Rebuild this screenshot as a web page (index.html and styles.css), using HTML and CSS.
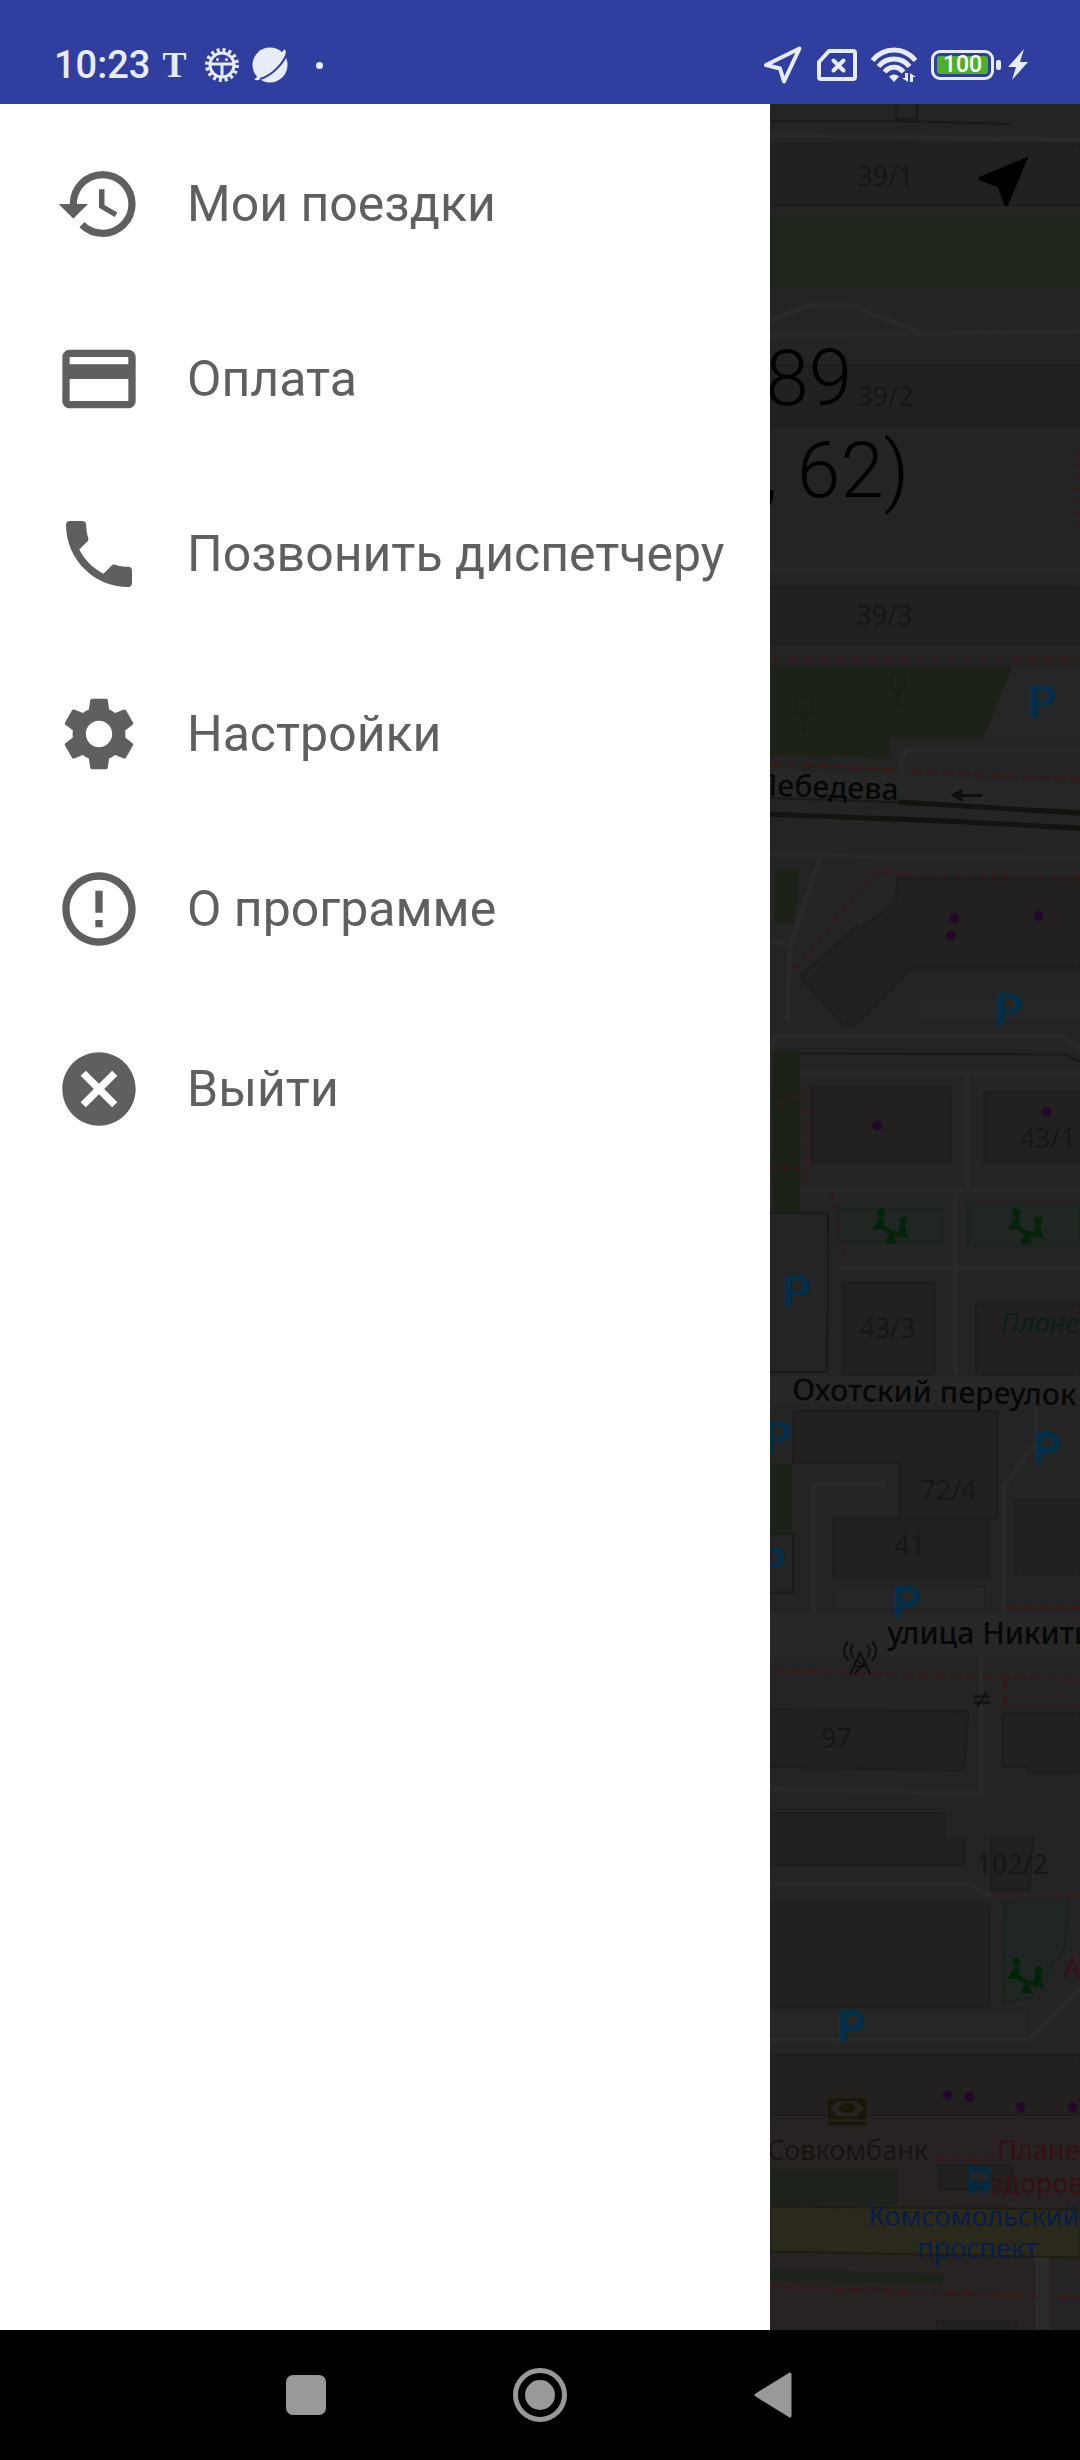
FILE: index.html
```
<!DOCTYPE html>
<html lang="ru">
<head>
  <meta charset="UTF-8">
  <meta name="viewport" content="width=device-width, initial-scale=1">
  <title>Меню</title>
  <link rel="stylesheet" href="styles.css">
</head>
<body>

<header class="status">
  <div class="status-left">
    <span class="time">10:23</span>
    <span class="t-mark">T</span>
    <svg class="gear" width="36" height="36" viewBox="0 0 36 36">
      <circle cx="18" cy="18" r="15" fill="none" stroke="currentColor" stroke-width="4" stroke-dasharray="3 2.9"/>
      <circle cx="18" cy="18" r="12" fill="none" stroke="currentColor" stroke-width="3"/>
      <path d="M6 17h24M18 17v13" stroke="currentColor" stroke-width="3"/>
      <circle cx="13.500" cy="12.500" r="1.500" fill="currentColor"/>
      <circle cx="22.500" cy="12.500" r="1.500" fill="currentColor"/>
    </svg>
    <svg width="36" height="36" viewBox="0 0 36 36">
      <circle cx="18" cy="18" r="17.500" fill="currentColor"/>
      <path d="M32 3c3 3-3 11-10 18C14 28 6 34 3 32" fill="currentColor" stroke="currentColor" stroke-width="2"/>
      <path d="M34 9c-3 6-8 12-13 16-5 4-9 6-13 7" fill="none" stroke="#303f9f" stroke-width="2"/>
    </svg>
    <span class="dot"></span>
  </div>
  <div class="status-right">
    <svg width="40" height="40" viewBox="0 0 40 40">
      <path d="M36.500 3.500L3 20l14 3.500L21 36.500z" fill="none" stroke="currentColor" stroke-width="4" stroke-linejoin="round"/>
    </svg>
    <svg width="40" height="32" viewBox="0 0 40 32">
      <path d="M12 2h24q2 0 2 2v24q0 2-2 2H4q-2 0-2-2V13z" fill="none" stroke="currentColor" stroke-width="4" stroke-linejoin="round"/>
      <path d="M16.500 11.500l10 10M26.500 11.500l-10 10" stroke="currentColor" stroke-width="4" stroke-linecap="round"/>
    </svg>
    <svg width="46" height="36" viewBox="0 0 46 36">
      <g fill="none" stroke="currentColor" stroke-width="5">
        <path d="M1.500 13.500C13-0.500 33-.5 44.500 13.500"/>
        <path d="M7.500 19.500c8-10 23-10 31 0"/>
        <path d="M13.500 25c5-6.500 14-6.500 19 0"/>
      </g>
      <path d="M18 29.500q5-4 10 0l-5 5.500z" fill="currentColor"/>
      <path d="M37 26v9l-6-4h3v-5zM39 35v-9l6 4h-3v5z" fill="currentColor"/>
    </svg>
    <span class="battery"><span class="battery-level">100</span></span>
    <svg class="bolt" width="20" height="32" viewBox="0 0 20 32">
      <path d="M16 0L0 18h8L4 31l16-18h-8z" fill="currentColor"/>
    </svg>
  </div>
</header>

<div class="screen">
  <nav class="drawer">
    <ul class="menu">
      <li><a class="menu-item" href="#trips">
        <svg class="icon" viewBox="0 0 24 24"><path d="M13 3a9 9 0 0 0-9 9H1l3.890 3.890.070.140L9 12H6c0-3.870 3.130-7 7-7s7 3.130 7 7-3.130 7-7 7c-1.930 0-3.680-.79-4.940-2.060l-1.420 1.420A8.954 8.954 0 0 0 13 21a9 9 0 0 0 0-18zm-1 5v5l4.280 2.540.72-1.210-3.500-2.080V8H12z"/></svg>
        <span>Мои поездки</span>
      </a></li>
      <li><a class="menu-item" href="#payment">
        <svg class="icon" viewBox="0 0 24 24"><path d="M20 4H4c-1.110 0-1.990.89-1.990 2L2 18c0 1.110.89 2 2 2h16c1.110 0 2-.89 2-2V6c0-1.110-.89-2-2-2zm0 14H4v-6h16v6zm0-10H4V6h16v2z"/></svg>
        <span>Оплата</span>
      </a></li>
      <li><a class="menu-item" href="#call">
        <svg class="icon" viewBox="0 0 24 24"><path d="M6.620 10.790c1.440 2.830 3.760 5.140 6.590 6.590l2.200-2.200c.27-.27.67-.36 1.020-.24 1.120.37 2.330.57 3.570.57.55 0 1 .45 1 1V20c0 .55-.45 1-1 1-9.390 0-17-7.610-17-17 0-.55.45-1 1-1h3.500c.55 0 1 .45 1 1 0 1.250.2 2.450.57 3.570.11.35.03.74-.25 1.020l-2.200 2.200z"/></svg>
        <span>Позвонить диспетчеру</span>
      </a></li>
    </ul>
    <ul class="menu">
      <li><a class="menu-item" href="#settings">
        <svg class="icon" viewBox="0 0 24 24"><path d="M19.140 12.940c.04-.3.060-.61.060-.94 0-.32-.02-.64-.07-.94l2.030-1.580c.18-.14.23-.41.12-.61l-1.920-3.320c-.12-.22-.37-.29-.59-.22l-2.390.96c-.5-.38-1.030-.7-1.620-.94l-.36-2.540c-.04-.24-.24-.41-.48-.41h-3.840c-.24 0-.43.17-.47.41l-.36 2.540c-.59.24-1.130.57-1.620.94l-2.390-.96c-.22-.08-.47 0-.59.22L2.740 8.870c-.12.21-.08.47.12.61l2.030 1.580c-.05.3-.09.63-.09.94s.02.64.07.94l-2.030 1.580c-.18.14-.23.41-.12.61l1.920 3.320c.12.22.37.29.59.22l2.390-.96c.5.38 1.030.7 1.620.94l.36 2.540c.05.24.24.41.48.41h3.840c.24 0 .44-.17.47-.41l.36-2.540c.59-.24 1.130-.56 1.620-.94l2.390.96c.22.080.47 0 .59-.22l1.920-3.320c.12-.22.070-.47-.12-.61l-2.010-1.580zM12 15.600c-1.980 0-3.600-1.620-3.600-3.600s1.620-3.600 3.600-3.600 3.600 1.620 3.600 3.600-1.620 3.600-3.600 3.600z"/></svg>
        <span>Настройки</span>
      </a></li>
      <li><a class="menu-item" href="#about">
        <svg class="icon" viewBox="0 0 24 24"><path d="M11 15h2v2h-2zm0-8h2v6h-2zm.99-5C6.470 2 2 6.480 2 12s4.470 10 9.990 10C17.520 22 22 17.520 22 12S17.520 2 11.990 2zM12 20c-4.420 0-8-3.580-8-8s3.580-8 8-8 8 3.580 8 8-3.580 8-8 8z"/></svg>
        <span>О программе</span>
      </a></li>
    </ul>
    <ul class="menu">
      <li><a class="menu-item" href="#exit">
        <svg class="icon" viewBox="0 0 24 24"><path d="M12 2C6.470 2 2 6.470 2 12s4.470 10 10 10 10-4.470 10-10S17.530 2 12 2zm5 13.590L15.590 17 12 13.410 8.410 17 7 15.590 10.590 12 7 8.410 8.410 7 12 10.590 15.590 7 17 8.410 13.410 12 17 15.590z"/></svg>
        <span>Выйти</span>
      </a></li>
    </ul>
  </nav>

  <main class="map">
    <svg class="map-canvas" viewBox="770 104 310 2226" preserveAspectRatio="xMinYMin slice">
      <defs>
        <g id="playground" fill="#03240a">
          <circle cx="9" cy="5" r="4"/>
          <circle cx="31" cy="13" r="4"/>
          <path d="M7 10h5v8l7 5 7 1 2-7h5l1 8 3 7-6-3h-6l-4-2 4 9H13l4-9-7-5H0z"/>
        </g>
      </defs>

      <!-- street bands and parking lots -->
      <g class="lot">
        <path d="M1012 664h68v73l-97-1z"/>
        <path d="M918 997h162v22H918z"/>
        <path d="M834 1584h150v22H834z"/>
        <path d="M770 2008h257v24H770z"/>
      </g>
      <g class="street">
        <path d="M770 768l310 16v24l-310-13z"/>
        <path d="M770 1374h310v28H770z"/>
        <path d="M770 1610h310v45H770z"/>
      </g>
      <path d="M770 2112h310v218H770z" fill="#272323"/>

      <!-- greens -->
      <g fill="#20251c">
        <path d="M770 217h310v71H770z"/>
        <path d="M770 664h242l-29 72h-93v21l-120-3z" fill="#1d2219"/>
        <path d="M775 867h25l-6 55h-19zM773 1050h27v160h-27zM770 1462h22v70h-22z" fill="#1d2219"/>
        <path d="M770 2166h128v35H770zM770 2266l172 4v11l-172-4z" fill="#1d221a"/>
      </g>
      <g fill="none" stroke="#181d15" stroke-width="2">
        <circle cx="804" cy="706" r="9"/>
        <circle cx="898" cy="681" r="8"/>
        <path d="M804 715v17M898 689v18"/>
      </g>

      <!-- roads -->
      <g class="road">
        <path d="M770 135l310 5M770 320l42-16h36l72 28M770 335l310-4M770 569h310"/>
        <path d="M901 775v-12q0-14 14-14h165"/>
        <path d="M770 854l310 3M820 855l-30 90-3 75M770 938l20 8"/>
        <path d="M770 1047l7-13h283l20 14"/>
        <path d="M800 1071h280M800 1188h280M840 1266h240M967 1071v117M955 1188v185"/>
        <path d="M813 1610v-128h72M1036 1405v35l-33 45v125"/>
        <path d="M981 1655v136l-211-5M770 1882h200l20 11"/>
        <path d="M770 2037h258l52-52"/>
      </g>

      <!-- buildings -->
      <g class="building">
        <path d="M770 144h310v61H770zM770 365h310v60H770zM770 587h310v56H770z"/>
        <path d="M897 877h183v89H912l-57 58h-12l-43-49 57-50 3 3 36-28z"/>
        <path d="M812 1086h138v74H812zM984 1091h96v69h-96z"/>
        <path d="M843 1281h91v91h-91zM976 1302h104v70H976z"/>
        <path d="M793 1409h204v107h-97v-55H793zM833 1516h154v58H833zM1015 1498h65v74h-65z"/>
        <path d="M770 1707l198 2-4 59-194-4zM1002 1710h78v60h-52v-6h-26z"/>
        <path d="M770 1810h174v27h20v25H770zM991 1835h42l-4 52h-38z"/>
        <path d="M770 1901h219v102H770zM770 2052h310v60H770z"/>
        <path d="M939 2162h72v24h-72zM937 2318h79v12h-79z"/>
      </g>
      <path d="M770 1211h58l-1 159h-57M770 1532h23v58h-23M896 104v15h21v-15M770 121h130l110 3M800 1052l265 1 15 7" fill="none" stroke="#1a1a1a" stroke-width="2"/>

      <g fill="#202621" stroke="#1b241c" stroke-width="2">
        <path d="M838 1207h104v33H838zM968 1203h112v40H968z"/>
        <path d="M1005 1900h63l-4 45-34 50-27 4z"/>
      </g>
      <use href="#playground" x="872" y="1206"/>
      <use href="#playground" x="1007" y="1206"/>
      <use href="#playground" x="1007" y="1954"/>

      <!-- tram line -->
      <path d="M898 801l182 11M770 813l180 7 130 7" fill="none" stroke="#131310" stroke-width="5"/>
      <path d="M770 797l128 4" stroke="#191917" stroke-width="2"/>
      <path d="M950 794l12-6v5h20v3h-20v5z" fill="#0f0f0f"/>

      <!-- avenue -->
      <path d="M770 2203l310 3v48l-310-6z" fill="#2a291c" stroke="#1d1d10" stroke-width="2"/>
      <path d="M1042 2254v76" stroke="#2c2b2b" stroke-width="14"/>
      <path d="M1056 2258l24 16v56h-24z" fill="#242424"/>

      <!-- footpaths -->
      <g class="footpath">
        <path d="M770 658h310M770 762l130 7M911 770l169 9"/>
        <path d="M1005 1605h75M775 1668l215 7 90 2M1005 1677v27h75"/>
        <path d="M935 2156h62M770 2283l265 10M1058 2294h22"/>
      </g>
      <g class="footpath dotted">
        <path d="M1078 450v80M1080 876l-207-4-80 98"/>
        <path d="M780 1103l26-15v96M770 1166h36M832 1190l13 70M993 1893h87"/>
      </g>

      <g fill="#24082a">
        <circle cx="954" cy="917" r="5"/>
        <circle cx="951" cy="934" r="5"/>
        <circle cx="1038" cy="915" r="5"/>
        <circle cx="877" cy="1124" r="5"/>
        <circle cx="1046" cy="1110" r="5"/>
        <circle cx="947" cy="2092" r="5"/>
        <circle cx="969" cy="2094" r="5"/>
        <circle cx="1020" cy="2104" r="5"/>
        <circle cx="1072" cy="2104" r="5"/>
      </g>

      <!-- antenna, gate, bank, bus stop -->
      <g fill="none" stroke="#0f0f0f" stroke-width="2">
        <path d="M850 1672l10-22 10 22M854 1664h12M856 1658l10 6M866 1658l-12 14"/>
        <path d="M853 1642q-5 6 0 13M867 1642q5 6 0 13M848 1639q-8 9 0 19M872 1639q8 9 0 19"/>
        <path d="M973 1694h17M973 1700h17M977 1704l9-14"/>
      </g>
      <path d="M828 2095h38v21h-38zM828 2118h38v4h-38z" fill="#1c1608"/>
      <path d="M830 2105l8-7h18l8 7-8 8h-18z" fill="#272320"/>
      <ellipse cx="847" cy="2105" rx="8" ry="5" fill="#1c1608"/>
      <path d="M970 2163h17q3 0 3 3v20h-3v4h-4v-4h-9v4h-4v-4h-3v-20q0-3 3-3z" fill="#042a42"/>
      <path d="M970 2169h17v9h-17z" fill="#252525"/>

      <g class="house">
        <text x="857" y="186">39/1</text>
        <text x="857" y="406">39/2</text>
        <text x="856" y="624">39/3</text>
        <text x="1019" y="1146">43/1</text>
        <text x="859" y="1336">43/3</text>
        <text x="920" y="1498">72/4</text>
        <text x="894" y="1553">41</text>
        <text x="821" y="1745">97</text>
        <text x="976" y="1871">102/2</text>
      </g>
      <g class="street-name">
        <text x="898" y="799" text-anchor="end" transform="rotate(2 898 799)">Лебедева</text>
        <text x="792" y="1398" transform="rotate(1 792 1398)">Охотский переулок</text>
        <text x="887" y="1642">улица Никитина</text>
      </g>
      <g class="parking">
        <text x="1027" y="716">P</text>
        <text x="994" y="1024">P</text>
        <text x="782" y="1305">P</text>
        <text x="763" y="1451">P</text>
        <text x="1032" y="1462">P</text>
        <text x="757" y="1577">P</text>
        <text x="892" y="1616">P</text>
        <text x="837" y="2039">P</text>
      </g>
      <g class="place">
        <text x="1001" y="1331" class="mall">Планета</text>
        <text x="928" y="2157" text-anchor="end" class="bank">Совкомбанк</text>
        <text x="1063" y="1975">А</text>
        <text x="997" y="2157">Планета</text>
        <text x="990" y="2190">здоровья</text>
        <text x="868" y="2223" class="stop">Комсомольский</text>
        <text x="977" y="2255" text-anchor="middle" class="stop">проспект</text>
      </g>

      <!-- address of the pickup point -->
      <g class="address">
        <text x="852" y="405" text-anchor="end">89</text>
        <text x="909" y="496" text-anchor="end">, 62)</text>
      </g>
      <path transform="translate(970 148) scale(2.770)" d="M21 3L3 10.530v.98l6.840 2.650L12.480 21h.98L21 3z"/>
    </svg>
  </main>
</div>

<footer class="navbar">
  <button class="nav-btn" type="button" aria-label="Недавние">
    <svg width="54" height="54" viewBox="0 0 54 54"><rect x="7" y="7" width="40" height="40" rx="7" fill="currentColor"/></svg>
  </button>
  <button class="nav-btn" type="button" aria-label="Домой">
    <svg width="54" height="54" viewBox="0 0 54 54"><circle cx="27" cy="27" r="24.500" fill="none" stroke="currentColor" stroke-width="5"/><circle cx="27" cy="27" r="15" fill="currentColor"/></svg>
  </button>
  <button class="nav-btn" type="button" aria-label="Назад">
    <svg width="54" height="54" viewBox="0 0 54 54"><path d="M9 27L43 6v42z" fill="currentColor" stroke="currentColor" stroke-width="3" stroke-linejoin="round"/></svg>
  </button>
</footer>

</body>
</html>
```
FILE: styles.css
```
* {
  box-sizing: border-box;
}

body {
  margin: 0;
  min-height: 100vh;
  display: flex;
  flex-direction: column;
  font-family: Roboto, "Noto Sans", sans-serif;
  background-color: #000;
}

svg {
  display: block;
}

.status {
  display: flex;
  justify-content: space-between;
  align-items: center;
  height: 104px;
  padding: 26px 52px 0 54px;
  background-color: #303f9f;
  color: #e8ebf8;
}

.status-left,
.status-right {
  display: flex;
  align-items: center;
}

.status-left {
  gap: 12px;
}

.status-right {
  gap: 14px;
}

.time {
  font-size: 38px;
  font-weight: 500;
  line-height: 44px;
}

.t-mark {
  font-family: "Liberation Serif", serif;
  font-weight: bold;
  font-size: 36px;
  line-height: 44px;
}

.gear {
  margin-left: 6px;
}

.dot {
  width: 7px;
  height: 7px;
  margin-left: 16px;
  border-radius: 50%;
  background-color: currentColor;
}

.battery {
  position: relative;
  width: 63px;
  height: 30px;
  padding: 3px;
  border: 3px solid currentColor;
  border-radius: 9px;
}

.battery::after {
  content: "";
  position: absolute;
  right: -10px;
  top: 7px;
  width: 5px;
  height: 10px;
  border-radius: 2px;
  background-color: currentColor;
}

.battery-level {
  display: block;
  height: 18px;
  border-radius: 3px;
  background-color: #4db02a;
  color: #fff;
  font-size: 23px;
  font-weight: 500;
  line-height: 18px;
  text-align: center;
}

.screen {
  flex: 1;
  display: flex;
  min-height: 0;
}

.drawer {
  flex: 0 0 auto;
  display: flex;
  flex-direction: column;
  gap: 5px;
  padding-top: 12px;
  background-color: #fff;
}

.menu {
  list-style: none;
  margin: 0;
  padding: 0;
}

.menu-item {
  display: flex;
  align-items: center;
  gap: 44px;
  height: 175px;
  padding: 0 45px 0 55px;
  color: #5e5f60;
  font-size: 50px;
  text-decoration: none;
  white-space: nowrap;
}

.icon {
  width: 88px;
  height: 88px;
  fill: currentColor;
}

.map {
  position: relative;
  flex: 1;
  min-width: 0;
  background-color: #242424;
}

/* the canvas fills whatever the drawer leaves free */
.map-canvas {
  position: absolute;
  inset: 0;
  width: 100%;
  height: 100%;
}

.lot {
  fill: #262627;
  stroke: #212121;
}

.street {
  fill: #272727;
}

.road {
  fill: none;
  stroke: #29292a;
  stroke-width: 5;
}

.building {
  fill: #22211f;
  stroke: #1e1d1c;
  stroke-width: 2;
}

.footpath {
  fill: none;
  stroke: #351a19;
  stroke-width: 3;
  stroke-dasharray: 11 5;
}

.dotted {
  stroke-dasharray: 5 7;
}

.house {
  font-family: "Noto Sans", sans-serif;
  font-size: 27px;
  fill: #161616;
}

.street-name {
  font-family: "Noto Sans", sans-serif;
  font-size: 30px;
  font-weight: 500;
  fill: #070707;
}

.parking {
  font-size: 45px;
  font-weight: 700;
  fill: #032f4b;
}

.place {
  font-family: "Noto Sans", sans-serif;
  font-size: 27px;
  fill: #380f14;
}

.mall {
  font-style: italic;
  fill: #0b2015;
}

.bank {
  fill: #181310;
}

.stop {
  fill: #081d48;
}

.address {
  font-size: 78px;
  font-weight: 300;
  fill: #000;
}

.navbar {
  display: flex;
  justify-content: center;
  height: 130px;
  background-color: #000;
}

.nav-btn {
  display: flex;
  align-items: center;
  justify-content: center;
  width: 234px;
  border: 0;
  background: none;
  color: #999;
}
```
